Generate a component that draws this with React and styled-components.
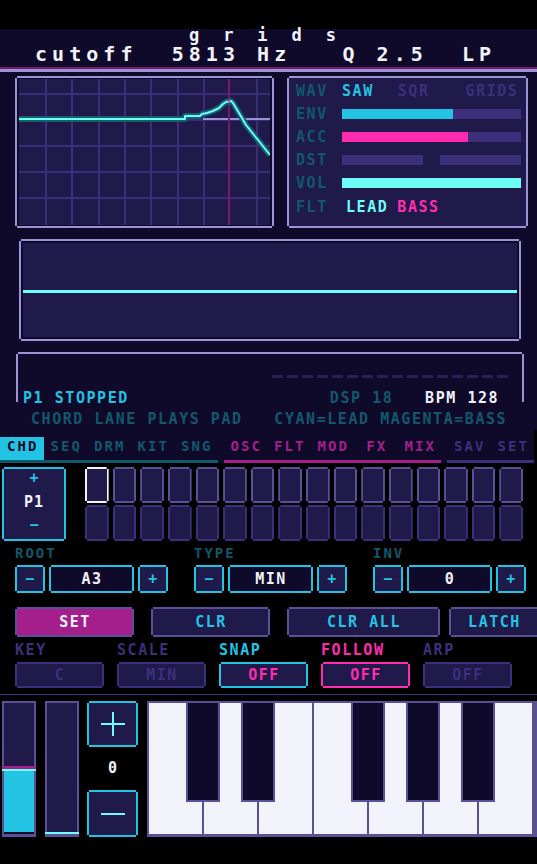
import React from "react";
import styled, { createGlobalStyle, css } from "styled-components";

const C = {
  black: "#000000",
  navy: "#0f0a29",
  deep: "#1f1a4a",
  grid: "#3b2d7a",
  lavender: "#9b93d6",
  edge: "#5b5095",
  dim: "#3e2f7c",
  dash: "#2a1f5c",
  teal: "#11586c",
  cyan: "#22c3e3",
  aqua: "#6ffdf7",
  pink: "#ff2cb0",
  plum: "#a51f8c",
  wine: "#761b6c",
  shadow: "#14606f",
  ink: "#f2f2fb",
};

const MONO = `"DejaVu Sans Mono", "Liberation Mono", monospace`;

/* pixel-style frame: the 2x2 corner squares are knocked out */
const notch = css`
  clip-path: polygon(
    2px 0,
    calc(100% - 2px) 0,
    calc(100% - 2px) 2px,
    100% 2px,
    100% calc(100% - 2px),
    calc(100% - 2px) calc(100% - 2px),
    calc(100% - 2px) 100%,
    2px 100%,
    2px calc(100% - 2px),
    0 calc(100% - 2px),
    0 2px,
    2px 2px
  );
`;

const small = css`
  font-size: 15px;
  letter-spacing: 1.55px;
`;

const Global = createGlobalStyle`
  html, body { margin: 0; padding: 0; background: ${C.black}; }
  body { font-family: ${MONO}; font-weight: bold; }
  * { box-sizing: border-box; }
`;

const Shell = styled.div`
  width: 537px;
  height: 864px;
  overflow: hidden;
  background: ${C.black};
  color: ${C.ink};
`;

const Crown = styled.div`
  height: 29px;
`;

/* ---------- header ---------- */
const Header = styled.header`
  height: 38px;
  background: ${C.navy};
  white-space: pre;
`;

const Title = styled.div`
  font-size: 17px;
  letter-spacing: 6.85px;
  line-height: 13px;
  padding-left: 189px;
`;

const Readout = styled.div`
  margin-top: 2px;
  font-size: 20px;
  letter-spacing: 5.04px;
  line-height: 20px;
  padding-left: 35px;
`;

const HeaderRule = styled.div`
  height: 5px;
  background: ${C.lavender};
  border-top: 2px solid ${C.wine};
`;

/* ---------- synth deck ---------- */
const Deck = styled.section`
  background: ${C.navy};
  padding: 4px 0 3px;
`;

const TopRow = styled.div`
  display: flex;
  height: 152px;
  padding-left: 15px;
  gap: 13px;
`;

const GraphFrame = styled.div`
  width: 259px;
  border: 2px solid ${C.lavender};
  padding: 1px 2px;
  background: ${C.navy};
  ${notch}
`;

const Chart = styled.svg`
  display: block;
`;

const Readings = styled.div`
  width: 241px;
  border: 2px solid ${C.lavender};
  background: ${C.deep};
  ${notch}
  padding: 2px 5px 0 7px;
  display: grid;
  grid-template-columns: 46px 1fr;
  grid-template-rows: 22px 23px 23px 23px 24px 24px;
  align-items: center;
`;

const RowLabel = styled.span`
  ${small}
  color: ${C.teal};
  line-height: 14px;
`;

const Choices = styled.div`
  display: flex;
  ${small}
  line-height: 14px;
`;

const Choice = styled.span`
  color: ${(p) => p.$tone};
  margin-left: ${(p) => p.$lead || 0}px;
`;

const Meter = styled.div`
  display: flex;
  gap: 17px;
  height: 10px;
`;

const Track = styled.div`
  flex: 1;
  height: 100%;
  background: ${C.dim};
`;

const TrackFill = styled.div`
  height: 100%;
  background: ${(p) => p.$tone};
`;

const WaveFrame = styled.div`
  margin: 11px 0 0 19px;
  width: 502px;
  height: 102px;
  border: 2px solid ${C.lavender};
  padding: 2px;
  background: ${C.navy};
  ${notch}
`;

const Scope = styled.svg`
  display: block;
  width: 100%;
  height: 100%;
`;

const StatusFrame = styled.div`
  margin: 11px 0 0 16px;
  width: 508px;
  border: 2px solid ${C.lavender};
  border-bottom: 0;
  padding: 21px 4px 0 5px;
  ${notch}
`;

const Steps = styled.div`
  display: flex;
  gap: 4px;
  margin-left: 249px;
`;

const Step = styled.span`
  width: 11px;
  height: 3px;
  background: ${C.dash};
`;

const StatusLine = styled.div`
  margin-top: 14px;
  ${small}
  line-height: 12px;
  white-space: pre;
`;

const Tone = styled.span`
  color: ${(p) => p.$tone};
`;

const Hint = styled.div`
  margin-top: 7px;
  padding-left: 31px;
  ${small}
  line-height: 16px;
  white-space: pre;
  color: ${C.teal};
`;

/* ---------- page tabs ---------- */
const TabBar = styled.nav`
  width: 534px;
  background: ${C.navy};
  padding-top: 7px;
  display: flex;
  gap: 6px;
`;

const TabGroup = styled.div`
  flex: ${(p) => p.$n};
  display: flex;
  border-bottom: 3px solid ${(p) => p.$tone};
`;

const Tab = styled.div`
  flex: 1;
  height: 23px;
  line-height: 18px;
  text-align: center;
  font-size: 14px;
  letter-spacing: 2px;
  padding-left: 2px;
  color: ${(p) => (p.$active ? C.navy : p.$tone)};
  background: ${(p) => (p.$active ? C.cyan : "transparent")};
`;

/* ---------- chord lane ---------- */
const Lower = styled.section`
  padding-top: 4px;
`;

const PadRow = styled.div`
  display: flex;
  align-items: flex-start;
  padding-left: 2px;
`;

const PageCard = styled.div`
  width: 64px;
  height: 74px;
  border: 2px solid ${C.cyan};
  background: ${C.deep};
  ${notch}
  display: flex;
  flex-direction: column;
  align-items: center;
  padding-top: 2px;
  font-size: 15px;
  line-height: 14px;
`;

const PageMark = styled.span`
  color: ${C.cyan};
  margin-top: ${(p) => p.$lead || 0}px;
`;

const PageName = styled.span`
  color: ${C.ink};
  margin-top: 10px;
  letter-spacing: 1px;
`;

const PadGrid = styled.div`
  margin-left: 19px;
  width: 438px;
  display: grid;
  grid-template-columns: repeat(16, 1fr);
  grid-template-rows: 36px 36px;
  gap: 2px 4px;
`;

const Pad = styled.div`
  border: 2px solid ${(p) => p.$edge};
  background: ${C.deep};
  ${notch}
`;

const ControlRow = styled.div`
  margin-top: 5px;
  display: flex;
  padding-left: 15px;
  gap: 26px;
`;

const Field = styled.div`
  display: flex;
  flex-direction: column;
`;

const FieldLabel = styled.span`
  font-size: 14px;
  letter-spacing: 2px;
  line-height: 14px;
  color: ${C.teal};
  margin-bottom: 5px;
`;

const Stepper = styled.div`
  display: flex;
  gap: 4px;
  height: 28px;
`;

const StepKey = styled.div`
  width: ${(p) => (p.$value ? 85 : 30)}px;
  border: 2px solid ${C.cyan};
  background: ${(p) => (p.$value ? C.navy : C.deep)};
  color: ${(p) => (p.$value ? C.ink : C.cyan)};
  ${notch}
  display: flex;
  align-items: center;
  justify-content: center;
  font-size: 15px;
  letter-spacing: 1.5px;
  padding-left: 1px;
  line-height: 1;
`;

const ActionRow = styled.div`
  margin-top: 14px;
  display: flex;
  padding-left: 15px;
`;

const ActionButton = styled.div`
  flex: 0 0 ${(p) => p.$w}px;
  margin-left: ${(p) => p.$lead || 0}px;
  height: 30px;
  border: 2px solid ${C.edge};
  background: ${(p) => p.$fill};
  color: ${(p) => p.$ink};
  ${notch}
  display: flex;
  align-items: center;
  justify-content: center;
  ${small}
  padding-left: 1px;
`;

const OptionRow = styled.div`
  margin-top: 6px;
  display: flex;
  padding-left: 15px;
  gap: 13px;
`;

const Option = styled.div`
  width: 89px;
  display: flex;
  flex-direction: column;
`;

const OptionLabel = styled.span`
  ${small}
  line-height: 14px;
  color: ${(p) => p.$tone};
  margin-bottom: 5px;
`;

const OptionBox = styled.div`
  height: 26px;
  border: 2px solid ${(p) => p.$edge};
  background: ${C.deep};
  color: ${(p) => p.$tone};
  ${notch}
  display: flex;
  align-items: center;
  justify-content: center;
  ${small}
  padding-left: 1px;
`;

const Rule = styled.div`
  margin-top: 6px;
  height: 1px;
  background: ${C.dim};
`;

/* ---------- performance strip ---------- */
const KeysRow = styled.div`
  margin-top: 6px;
  display: flex;
  height: 136px;
  padding-left: 2px;
`;

const Fader = styled.div`
  flex: 0 0 34px;
  margin-left: ${(p) => p.$lead || 0}px;
  border: solid ${C.edge};
  border-width: 2px 2px 3px;
  background: ${C.deep};
  display: flex;
  flex-direction: column;
  justify-content: flex-end;
`;

const FaderCap = styled.div`
  height: 3px;
  margin: 0 -2px;
  background: ${C.plum};
`;

const FaderGlint = styled.div`
  height: 2px;
  margin: 0 -2px;
  background: ${C.aqua};
`;

const FaderFill = styled.div`
  background: ${C.cyan};
`;

const FaderFoot = styled.div`
  height: 2px;
  background: ${C.navy};
`;

const PitchColumn = styled.div`
  flex: 0 0 51px;
  margin-left: 8px;
  display: flex;
  flex-direction: column;
  justify-content: space-between;
  align-items: center;
`;

const PitchButton = styled.div`
  width: 51px;
  height: ${(p) => p.$h}px;
  border: 2px solid ${C.cyan};
  background: ${C.deep};
  ${notch}
  display: flex;
  align-items: center;
  justify-content: center;
`;

const PitchValue = styled.span`
  font-size: 15px;
  line-height: 1;
  color: ${C.ink};
`;

const Piano = styled.div`
  flex: 1;
  margin-left: 9px;
  position: relative;
  display: flex;
  border: solid ${C.edge};
  border-width: 2px 3px 3px 2px;
`;

const WhiteKey = styled.div`
  flex: 0 0 55px;
  background: ${C.ink};
  border-right: 2px solid ${C.edge};
`;

const BlackKey = styled.div`
  position: absolute;
  top: -2px;
  left: ${(p) => p.$slot * 55 - 18}px;
  width: 34px;
  height: 101px;
  background: ${C.navy};
  border: 2px solid ${C.edge};
`;

/* ---------- drawings ---------- */
const V_LINES = [26, 52, 79, 105, 131, 158, 184, 237];
const H_LINES = [14, 40, 66, 92, 118];
const CURVE =
  "0,40 166,40 166,37 181,37 183,35 188,34 194,32 200,29 204,25 207,23 212,22 214,24 217,29 220,34 223,39 227,46 231,51 235,56 239,61 243,66 247,71 251,76";

function FilterChart() {
  return (
    <Chart width="251" height="146" viewBox="0 0 251 146">
      <rect width="251" height="146" fill={C.deep} />
      {V_LINES.map((x) => (
        <rect key={`v${x}`} x={x} y="0" width="2" height="146" fill={C.grid} shapeRendering="crispEdges" />
      ))}
      {H_LINES.map((y) => (
        <rect key={`h${y}`} x="0" y={y} width="251" height="2" fill={C.grid} shapeRendering="crispEdges" />
      ))}
      <rect x="184" y="39" width="67" height="2" fill={C.lavender} shapeRendering="crispEdges" />
      <rect x="209" y="0" width="2" height="146" fill={C.wine} shapeRendering="crispEdges" />
      <polyline points={CURVE} fill="none" stroke={C.shadow} strokeWidth="6" strokeLinejoin="round" />
      <polyline points={CURVE} fill="none" stroke={C.aqua} strokeWidth="2" strokeLinejoin="round" />
      <rect x="209" y="21" width="2" height="2" fill={C.pink} />
    </Chart>
  );
}

function PlusGlyph() {
  return (
    <svg width="24" height="24" viewBox="0 0 24 24" shapeRendering="crispEdges">
      <rect x="0" y="11" width="24" height="2" fill={C.aqua} />
      <rect x="11" y="0" width="2" height="24" fill={C.aqua} />
    </svg>
  );
}

function MinusGlyph() {
  return (
    <svg width="24" height="24" viewBox="0 0 24 24" shapeRendering="crispEdges">
      <rect x="0" y="11" width="24" height="2" fill={C.aqua} />
    </svg>
  );
}

function Level({ level, hot }) {
  const fill = Math.round(level * 127);
  return (
    <>
      {hot && <FaderCap />}
      <FaderGlint />
      {fill > 0 && <FaderFill style={{ height: `${fill}px` }} />}
      {fill > 0 && <FaderFoot />}
    </>
  );
}

const TABS = [
  { tone: C.teal, items: ["CHD", "SEQ", "DRM", "KIT", "SNG"] },
  { tone: C.plum, items: ["OSC", "FLT", "MOD", "FX", "MIX"] },
  { tone: C.dim, items: ["SAV", "SET"] },
];

const STEPPERS = [
  { label: "ROOT", value: "A3" },
  { label: "TYPE", value: "MIN" },
  { label: "INV", value: "0" },
];

const OPTIONS = [
  { label: "KEY", value: "C", labelTone: C.dim, edge: C.dim, tone: C.dim },
  { label: "SCALE", value: "MIN", labelTone: C.dim, edge: C.dim, tone: C.dim },
  { label: "SNAP", value: "OFF", labelTone: C.cyan, edge: C.cyan, tone: C.pink },
  { label: "FOLLOW", value: "OFF", labelTone: C.pink, edge: C.pink, tone: C.pink },
  { label: "ARP", value: "OFF", labelTone: C.dim, edge: C.dim, tone: C.dim },
];

export default function App() {
  const pads = [];
  for (let row = 0; row < 2; row++) {
    for (let col = 0; col < 16; col++) {
      const edge = row === 0 ? (col === 0 ? C.ink : C.edge) : C.dim;
      pads.push(<Pad key={`${row}-${col}`} $edge={edge} />);
    }
  }

  return (
    <>
      <Global />
      <Shell>
        <Crown />
        <Header>
          <Title>g r i d s</Title>
          <Readout>{"cutoff  5813 Hz   Q 2.5  LP"}</Readout>
        </Header>
        <HeaderRule />

        <Deck>
          <TopRow>
            <GraphFrame>
              <FilterChart />
            </GraphFrame>
            <Readings>
              <RowLabel>WAV</RowLabel>
              <Choices>
                <Choice $tone={C.cyan}>SAW</Choice>
                <Choice $tone={C.dim} $lead={24}>SQR</Choice>
                <Choice $tone={C.dim} $lead={36}>GRIDS</Choice>
              </Choices>

              <RowLabel>ENV</RowLabel>
              <Meter>
                <Track>
                  <TrackFill $tone={C.cyan} style={{ width: "62%" }} />
                </Track>
              </Meter>

              <RowLabel>ACC</RowLabel>
              <Meter>
                <Track>
                  <TrackFill $tone={C.pink} style={{ width: "70.5%" }} />
                </Track>
              </Meter>

              <RowLabel>DST</RowLabel>
              <Meter>
                <Track />
                <Track />
              </Meter>

              <RowLabel>VOL</RowLabel>
              <Meter>
                <Track>
                  <TrackFill $tone={C.aqua} style={{ width: "100%" }} />
                </Track>
              </Meter>

              <RowLabel>FLT</RowLabel>
              <Choices>
                <Choice $tone={C.aqua} $lead={4}>LEAD</Choice>
                <Choice $tone={C.pink} $lead={9}>BASS</Choice>
              </Choices>
            </Readings>
          </TopRow>

          <WaveFrame>
            <Scope viewBox="0 0 494 94" preserveAspectRatio="none">
              <rect width="494" height="94" fill={C.deep} />
              <rect x="0" y="47" width="494" height="3" fill={C.aqua} shapeRendering="crispEdges" />
            </Scope>
          </WaveFrame>

          <StatusFrame>
            <Steps>
              {Array.from({ length: 16 }, (_, i) => (
                <Step key={i} />
              ))}
            </Steps>
            <StatusLine>
              <Tone $tone={C.cyan}>P1 STOPPED</Tone>
              {"                   "}
              <Tone $tone={C.teal}>DSP 18</Tone>
              {"   "}
              <Tone $tone={C.ink}>BPM 128</Tone>
            </StatusLine>
          </StatusFrame>

          <Hint>{"CHORD LANE PLAYS PAD   CYAN=LEAD MAGENTA=BASS"}</Hint>
        </Deck>

        <TabBar>
          {TABS.map((group) => (
            <TabGroup key={group.items[0]} $n={group.items.length} $tone={group.tone}>
              {group.items.map((item) => (
                <Tab key={item} $tone={group.tone} $active={item === "CHD"}>
                  {item}
                </Tab>
              ))}
            </TabGroup>
          ))}
        </TabBar>

        <Lower>
          <PadRow>
            <PageCard>
              <PageMark>+</PageMark>
              <PageName>P1</PageName>
              <PageMark $lead={9}>−</PageMark>
            </PageCard>
            <PadGrid>{pads}</PadGrid>
          </PadRow>

          <ControlRow>
            {STEPPERS.map((s) => (
              <Field key={s.label}>
                <FieldLabel>{s.label}</FieldLabel>
                <Stepper>
                  <StepKey>−</StepKey>
                  <StepKey $value>{s.value}</StepKey>
                  <StepKey>+</StepKey>
                </Stepper>
              </Field>
            ))}
          </ControlRow>

          <ActionRow>
            <ActionButton $w={119} $fill={C.plum} $ink={C.ink}>SET</ActionButton>
            <ActionButton $w={119} $lead={17} $fill={C.deep} $ink={C.cyan}>CLR</ActionButton>
            <ActionButton $w={153} $lead={17} $fill={C.deep} $ink={C.cyan}>CLR ALL</ActionButton>
            <ActionButton $w={90} $lead={9} $fill={C.deep} $ink={C.cyan}>LATCH</ActionButton>
          </ActionRow>

          <OptionRow>
            {OPTIONS.map((o) => (
              <Option key={o.label}>
                <OptionLabel $tone={o.labelTone}>{o.label}</OptionLabel>
                <OptionBox $edge={o.edge} $tone={o.tone}>{o.value}</OptionBox>
              </Option>
            ))}
          </OptionRow>

          <Rule />

          <KeysRow>
            <Fader>
              <Level level={0.48} hot />
            </Fader>
            <Fader $lead={9}>
              <Level level={0} />
            </Fader>
            <PitchColumn>
              <PitchButton $h={46}>
                <PlusGlyph />
              </PitchButton>
              <PitchValue>0</PitchValue>
              <PitchButton $h={47}>
                <MinusGlyph />
              </PitchButton>
            </PitchColumn>
            <Piano>
              {Array.from({ length: 7 }, (_, i) => (
                <WhiteKey key={i} />
              ))}
              {[1, 2, 4, 5, 6].map((slot) => (
                <BlackKey key={slot} $slot={slot} />
              ))}
            </Piano>
          </KeysRow>
        </Lower>
      </Shell>
    </>
  );
}
